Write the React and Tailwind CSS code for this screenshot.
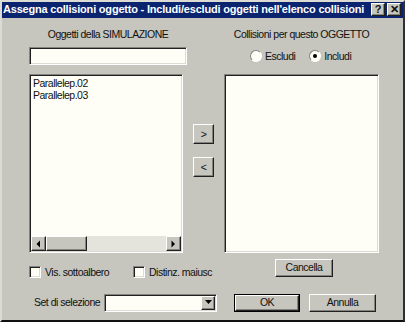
import React from 'react';

const font = { fontFamily: '"Liberation Sans", Arial, sans-serif' };

function Raised({ className = '', children }) {
  return (
    <div
      className={`flex items-center justify-center bg-[#c6c5be] border border-t-white border-l-white border-r-[#202020] border-b-[#202020] shadow-[inset_-1px_-1px_0_#84837d] ${className}`}
    >
      {children}
    </div>
  );
}

function Sunken({ className = '', children }) {
  return (
    <div
      className={`bg-[#fefef6] border border-t-[#84837d] border-l-[#84837d] border-r-white border-b-white shadow-[inset_1px_1px_0_#202020,inset_-1px_-1px_0_#dcdcd4] ${className}`}
    >
      {children}
    </div>
  );
}

function Check({ label, className = '' }) {
  return (
    <div className={`flex items-center gap-[4px] whitespace-nowrap shrink-0 ${className}`}>
      <Sunken className="w-[12px] h-[12px] shrink-0" />
      <span className="leading-none">{label}</span>
    </div>
  );
}

function Radio({ label, checked }) {
  return (
    <div className="flex items-center gap-[3px] whitespace-nowrap">
      <div className="relative w-[12px] h-[12px] shrink-0 rounded-full bg-[#fefef6] border border-t-[#84837d] border-l-[#84837d] border-r-white border-b-white">
        {checked && <div className="absolute left-[3px] top-[3px] w-[4px] h-[4px] rounded-full bg-black" />}
      </div>
      <span className="leading-none">{label}</span>
    </div>
  );
}

function Arrow({ dir }) {
  const pts = {
    left: '4,0.5 0.5,4 4,7.5',
    right: '0.5,0.5 4,4 0.5,7.5',
    down: '0,1 7,1 3.5,5',
  }[dir];
  const w = dir === 'down' ? 7 : 5;
  return (
    <svg width={w} height="8" viewBox={`0 0 ${w} 8`}>
      <polygon points={pts} fill="#000" />
    </svg>
  );
}

export default function App() {
  return (
    <div
      className="w-[405px] h-[322px] flex flex-col bg-[#c6c5be] text-[10.5px] tracking-[-0.5px] text-[#111] border-2 border-t-[#dcdcd4] border-l-[#dcdcd4] border-r-[#303030] border-b-[#101010] overflow-hidden"
      style={font}
    >
      {/* title bar */}
      <div className="h-[17px] -mt-[1px] flex items-center justify-between bg-[#0a2470] pl-[1px] pr-[2px]">
        <span className="text-white font-bold text-[11px] tracking-[-0.2px] leading-none whitespace-nowrap">
          Assegna collisioni oggetto - Includi/escludi oggetti nell'elenco collisioni
        </span>
        <div className="flex gap-[2px] tracking-normal shrink-0">
          <Raised className="w-[14px] h-[13px] text-[11px] font-bold leading-none">?</Raised>
          <Raised className="w-[14px] h-[13px] text-[11px] font-bold leading-none">✕</Raised>
        </div>
      </div>

      {/* main area */}
      <div className="flex pl-[27px] pt-[10px]">
        {/* left column */}
        <div className="w-[158px] flex flex-col">
          <div className="h-[13px] text-center leading-[13px] whitespace-nowrap">Oggetti della SIMULAZIONE</div>
          <Sunken className="mt-[6px] h-[18px]" />
          <Sunken className="mt-[9px] w-[154px] h-[179px] flex flex-col">
            <div className="flex-1 pl-[3px] pt-[2px] leading-[12px]">
              <div>Parallelep.02</div>
              <div>Parallelep.03</div>
            </div>
            <div className="h-[15px] mx-[1px] mb-[1px] flex bg-[#e4e3dc]">
              <Raised className="w-[15px] h-[15px]">
                <Arrow dir="left" />
              </Raised>
              <Raised className="w-[41px] h-[15px]" />
              <div className="flex-1" />
              <Raised className="w-[15px] h-[15px]">
                <Arrow dir="right" />
              </Raised>
            </div>
          </Sunken>
          <div className="mt-[13px] flex">
            <Check label="Vis. sottoalbero" className="w-[104px]" />
            <Check label="Distinz. maiusc" />
          </div>
        </div>

        {/* middle buttons */}
        <div className="w-[37px] pl-[6px] pt-[96px] flex flex-col gap-[13px]">
          <Raised className="w-[21px] h-[20px] leading-none">&gt;</Raised>
          <Raised className="w-[21px] h-[20px] leading-none">&lt;</Raised>
        </div>

        {/* right column */}
        <div className="w-[155px] flex flex-col">
          <div className="h-[13px] text-center leading-[13px] whitespace-nowrap">Collisioni per questo OGGETTO</div>
          <div className="mt-[9px] h-[12px] flex pl-[26px] gap-[14px]">
            <Radio label="Escludi" />
            <Radio label="Includi" checked />
          </div>
          <Sunken className="mt-[12px] h-[179px]" />
          <Raised className="mt-[6px] ml-[51px] w-[58px] h-[18px]">Cancella</Raised>
        </div>
      </div>

      {/* bottom row */}
      <div className="mt-[16px] flex items-center pl-[32px]">
        <span className="w-[70px] whitespace-nowrap">Set di selezione</span>
        <Sunken className="w-[113px] h-[18px] flex justify-end p-[1px]">
          <Raised className="w-[14px] h-full">
            <Arrow dir="down" />
          </Raised>
        </Sunken>
        <div className="ml-[17px] border border-black">
          <Raised className="w-[64px] h-[16px]">OK</Raised>
        </div>
        <Raised className="ml-[9px] w-[67px] h-[18px]">Annulla</Raised>
      </div>
    </div>
  );
}
